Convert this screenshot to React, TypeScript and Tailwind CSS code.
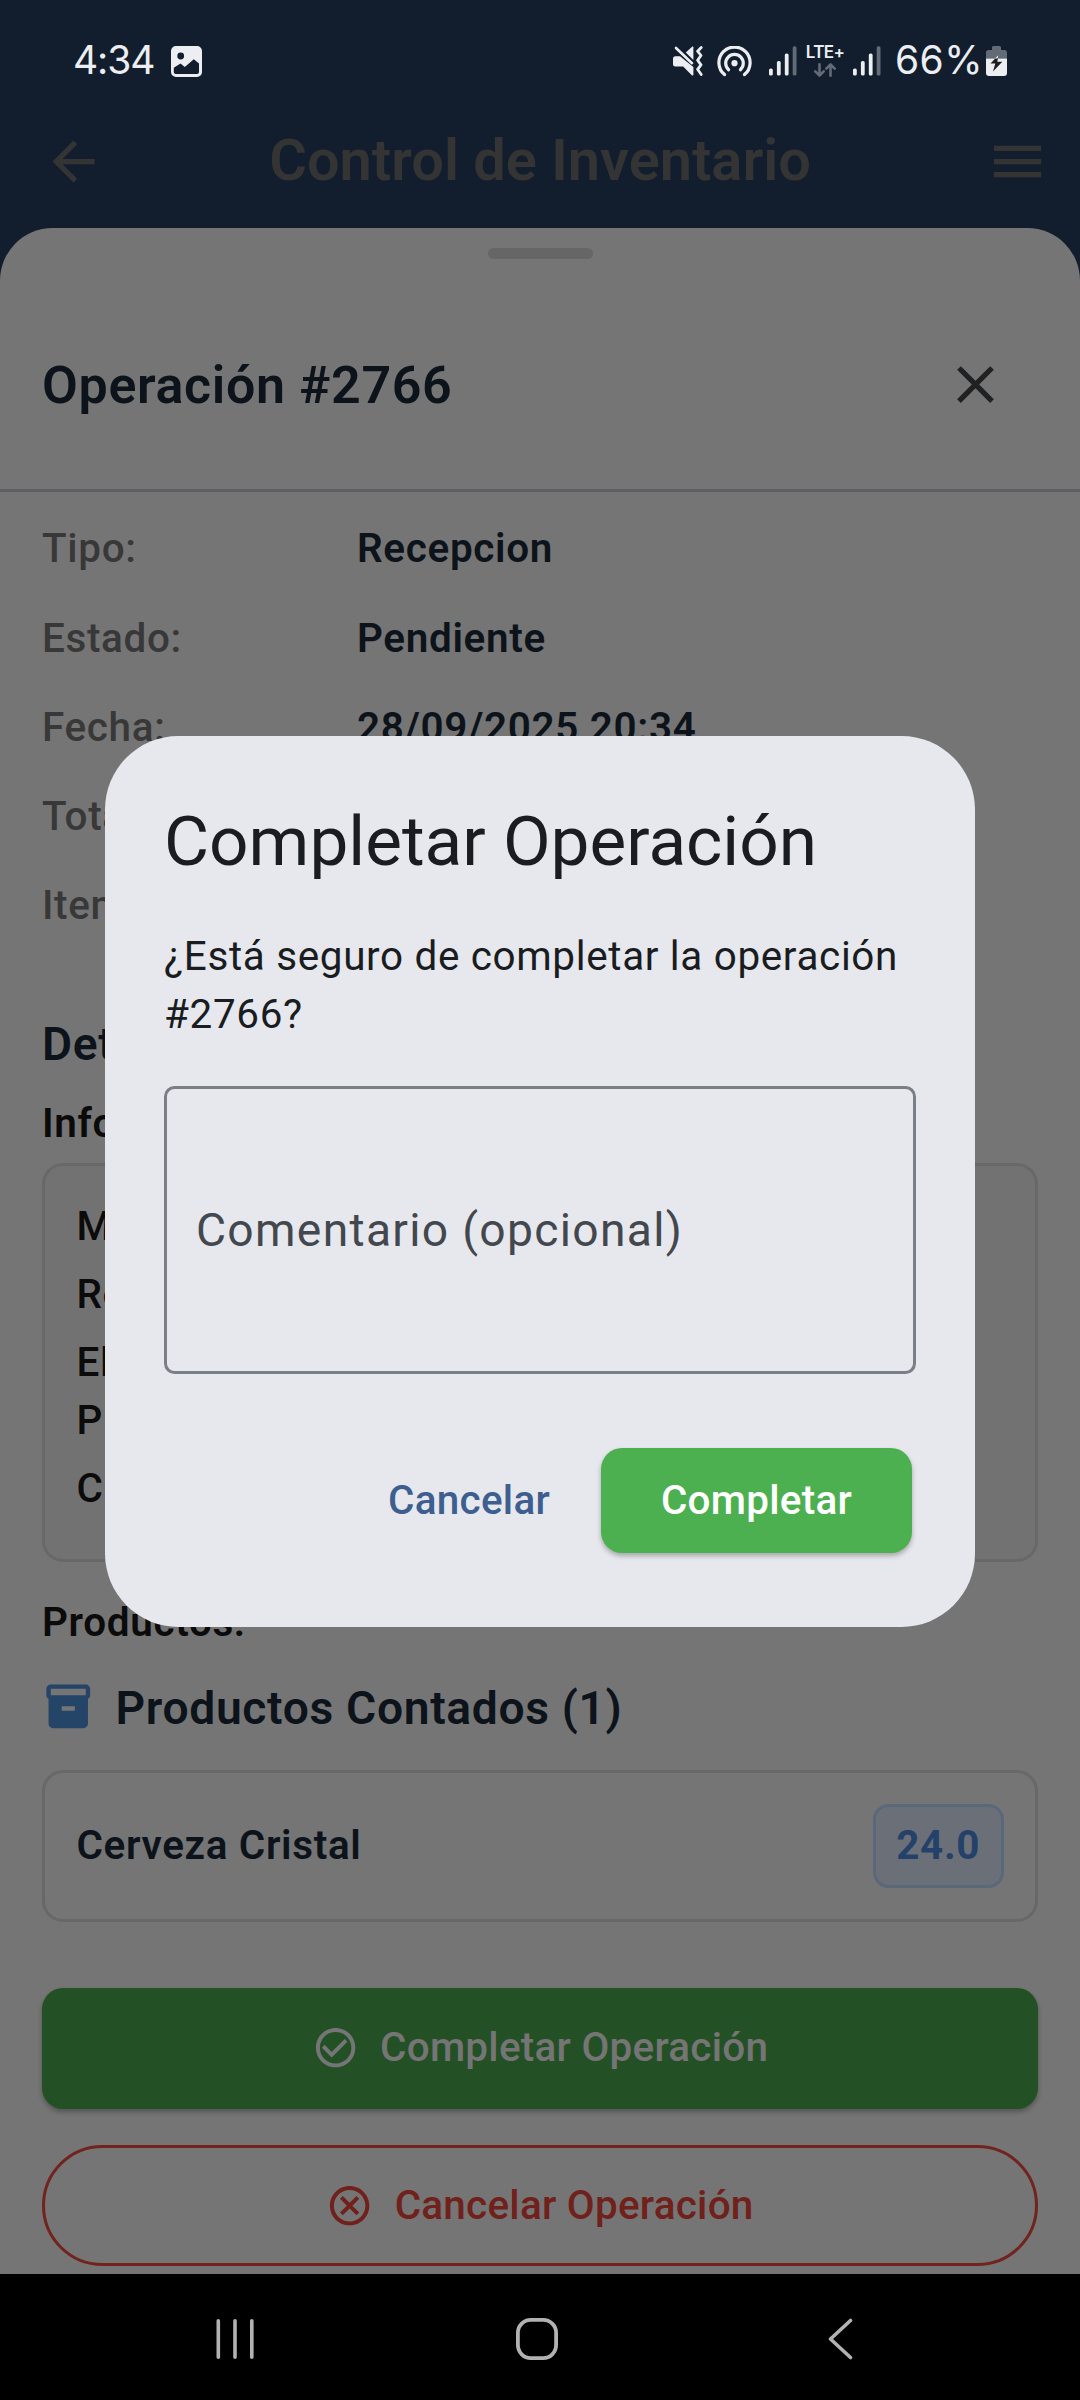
import type { ReactNode } from "react";

function MaterialIcon({ path, className }: { path: string; className: string }) {
  return (
    <svg viewBox="0 0 24 24" fill="currentColor" className={className}>
      <path d={path} />
    </svg>
  );
}

const icons = {
  back: "M20 11H7.83l5.59-5.59L12 4l-8 8 8 8 1.41-1.41L7.83 13H20v-2z",
  menu: "M3 18h18v-2H3v2zm0-5h18v-2H3v2zm0-7v2h18V6H3z",
  close: "M19 6.41L17.59 5 12 10.59 6.41 5 5 6.41 10.59 12 5 17.59 6.41 19 12 13.41 17.59 19 19 17.59 13.41 12z",
  box: "M20 2H4c-1 0-2 .9-2 2v3.01c0 .72.43 1.34 1 1.69V20c0 1.1 1.1 2 2 2h14c.9 0 2-.9 2-2V8.7c.57-.35 1-.97 1-1.69V4c0-1.1-1-2-2-2zm-5 12H9v-2h6v2zm5-7H4V4l16-.02V7z",
  check:
    "M16.59 7.58L10 14.17l-3.59-3.58L5 12l5 5 8-8-1.41-1.42zM12 2C6.48 2 2 6.48 2 12s4.48 10 10 10 10-4.48 10-10S17.52 2 12 2zm0 18c-4.42 0-8-3.58-8-8s3.58-8 8-8 8 3.58 8 8-3.58 8-8 8z",
  cancel:
    "M15.49 7.1L12 10.59 8.51 7.1 7.1 8.51 10.59 12 7.1 15.49 8.51 16.9 12 13.41 15.49 16.9 16.9 15.49 13.41 12 16.9 8.51 15.49 7.1zM12 2C6.47 2 2 6.47 2 12s4.47 10 10 10 10-4.47 10-10S17.53 2 12 2zm0 18c-4.41 0-8-3.59-8-8s3.59-8 8-8 8 3.59 8 8-3.59 8-8 8z",
};

function SignalBars() {
  return (
    <svg width="28" height="30" viewBox="0 0 28 30" fill="#eceef2">
      <rect x="0" y="22.5" width="3.8" height="7" rx="1.6" />
      <rect x="7.9" y="15" width="3.8" height="14.5" rx="1.6" />
      <rect x="15.8" y="7.5" width="3.8" height="22" rx="1.6" />
      <rect x="23.7" y="0.3" width="3.8" height="29.2" rx="1.6" fill="#636b77" />
    </svg>
  );
}

function StatusBar() {
  return (
    <div className="flex h-[88px] shrink-0 items-start pt-[46px] pl-[73px] pr-[73px] font-['Inter',sans-serif] text-[39px] leading-[30px] tracking-[-1.1px] text-[#eceef2]">
      <span className="-mt-px w-[98px]">4:34</span>
      <svg width="31" height="31" viewBox="0 0 31 31">
        <path
          fillRule="evenodd"
          fill="#eceef2"
          d="M5 0h21a5 5 0 0 1 5 5v21a5 5 0 0 1-5 5H5a5 5 0 0 1-5-5V5a5 5 0 0 1 5-5zM9.7 6.6a3.4 3.4 0 1 0 0 6.8 3.4 3.4 0 0 0 0-6.8zM2.8 21.7V26a2 2 0 0 0 2 2H26a2 2 0 0 0 2-2V17.5l-5.2-4.2L13.8 21l-4.3-3.6z"
        />
      </svg>
      <div className="ml-auto flex items-start">
        <svg width="30" height="30" viewBox="0 0 30 30" fill="#eceef2" className="mr-[14px]">
          <path d="M2 10.3h5L20.4 21v7.6c0 .9-.9 1.2-1.6.6L10.2 20.6H2.3A2.3 2.3 0 0 1 0 18.3v-5.6a2.4 2.4 0 0 1 2-2.4z" />
          <path d="M12.8 6.6 18.8.9c.7-.6 1.6-.3 1.6.6V13.9z" />
          <path d="M3 2 19 17.2" stroke="#eceef2" strokeWidth="2.6" strokeLinecap="round" />
          <path d="M28.2 1.5l-3.6 3.7 3.4 4.3-3.4 4.7 3.4 4.6-3.4 4.5 3.6 5.2" fill="none" stroke="#eceef2" strokeWidth="2.8" strokeLinecap="round" strokeLinejoin="round" />
        </svg>
        <svg width="35" height="31" viewBox="0 0 35 31" fill="none" stroke="#eceef2" strokeWidth="3.2" strokeLinecap="round" className="mr-[17px]">
          <path d="M7.5 28.6A15.6 15.6 0 1 1 27.5 28.6" />
          <path d="M11.6 23.8A8.8 8.8 0 1 1 23.4 23.8" />
          <circle cx="17.5" cy="17.2" r="3.1" fill="#eceef2" stroke="none" />
        </svg>
        <SignalBars />
        <div className="ml-[9px] flex w-[38px] flex-col items-center">
          <span className="text-[17px] font-semibold leading-[13px] tracking-[-0.6px]">LTE+</span>
          <svg width="22" height="14" viewBox="0 0 22 14" fill="none" stroke="#636b77" strokeWidth="2.6" strokeLinecap="round" strokeLinejoin="round" className="mt-[4px]">
            <path d="M5.5 1.3v11M1.3 8.3l4.2 4.2 4.2-4.2M16.5 12.7v-11M12.3 5.7l4.2-4.2 4.2 4.2" />
          </svg>
        </div>
        <span className="ml-[9px]">
          <SignalBars />
        </span>
        <span className="-mt-px ml-[14px] w-[91px] tracking-[0.4px]">66%</span>
        <svg width="21" height="30" viewBox="0 0 21 30">
          <path d="M6 1.5A1.5 1.5 0 0 1 7.5 0h6A1.5 1.5 0 0 1 15 1.5V4h3.5A2.5 2.5 0 0 1 21 6.5V12.5H0V6.5A2.5 2.5 0 0 1 2.5 4H6z" fill="#636b77" />
          <path d="M0 12.5H21V27a3 3 0 0 1-3 3H3a3 3 0 0 1-3-3z" fill="#eceef2" />
          <path d="M12.5 9 4.5 17.5h4.8L7 25.5l9.3-9.8h-5z" fill="#1d1d1d" />
          <path d="M12.5 9 8.9 12.5h2.7z" fill="#eceef2" />
        </svg>
      </div>
    </div>
  );
}

function AppBar() {
  return (
    <div className="flex h-[147px] shrink-0 items-center justify-between pl-[42px] pr-[31px] text-[#343434]">
      <MaterialIcon path={icons.back} className="size-[63px]" />
      <h1 className="pb-[3px] pr-[11px] text-[57.75px] font-semibold leading-[72px]">Control de Inventario</h1>
      <MaterialIcon path={icons.menu} className="size-[63px]" />
    </div>
  );
}

function InfoRow({ label, value }: { label: string; value?: string }) {
  return (
    <div className="flex font-semibold text-[#0d131a]">
      <span className="w-[315px] font-medium text-[#383838]">{label}</span>
      <span>{value}</span>
    </div>
  );
}

function ActionButton({ icon, className, children }: { icon: string; className: string; children: ReactNode }) {
  return (
    <button className={"flex h-[121px] w-full items-center justify-center gap-[21px] font-medium tracking-[0.26px] " + className}>
      <MaterialIcon path={icon} className="size-[47.25px]" />
      <span>{children}</span>
    </button>
  );
}

function OperationSheet() {
  return (
    <section className="relative -mt-[7.5px] flex-1 overflow-hidden rounded-t-[52.5px] bg-[#757575] text-[40.43px] leading-[57.75px] tracking-[0.66px] text-[#0b0b0b]">
      <div className="mx-auto mt-[20.5px] h-[10.5px] w-[105px] rounded-full bg-[#666666]" />
      <header className="flex items-center justify-between px-[42px] pb-[41.5px] pt-[63px]">
        <h2 className="pt-[2px] text-[51.98px] font-semibold leading-[66px] text-[#0d131a]">Operación #2766</h2>
        <span className="flex size-[126px] items-center justify-center text-[#202123]">
          <MaterialIcon path={icons.close} className="size-[63px]" />
        </span>
      </header>
      <div className="h-[3px] bg-[#5e5f62]" />
      <div className="px-[42px] pt-[28.25px]">
        <div className="flex flex-col gap-[31.5px]">
          <InfoRow label="Tipo:" value="Recepcion" />
          <InfoRow label="Estado:" value="Pendiente" />
          <InfoRow label="Fecha:" value="28/09/2025 20:34" />
          <InfoRow label="Total:" />
          <InfoRow label="Items:" />
        </div>
        <h3 className="mt-[74.5px] text-[46.2px] font-semibold leading-[69.3px] text-[#0d131a]">Detalles</h3>
        <h4 className="mt-[16px] font-semibold">Información:</h4>
        <div className="mt-[10.75px] flex h-[399px] flex-col gap-[10.5px] rounded-[21px] border-[3px] border-[#686868] bg-[#727272] p-[31.5px] font-medium">
          <p>Motivo</p>
          <p>Recepcion</p>
          <p>
            El
            <br />
            P
          </p>
          <p>C</p>
        </div>
        <h4 className="mt-[32px] font-semibold">Productos:</h4>
        <div className="mt-[21.5px] flex items-center gap-[21px]">
          <MaterialIcon path={icons.box} className="mb-[3px] size-[52.5px] text-[#244468]" />
          <h3 className="text-[46.2px] font-semibold leading-[69.3px] text-[#0d131a]">Productos Contados (1)</h3>
        </div>
        <div className="mt-[27.25px] flex h-[152.25px] items-center justify-between rounded-[21px] border-[3px] border-[#686868] px-[31.5px]">
          <span className="font-semibold text-[#0d131a]">Cerveza Cristal</span>
          <span className="flex h-[84px] w-[130.5px] items-center justify-center rounded-[15.75px] border-[3px] border-[#59687b] bg-[#6b7078] font-bold text-[#244269]">24.0</span>
        </div>
        <div className="mt-[65.25px] flex flex-col gap-[36.75px]">
          <ActionButton icon={icons.check} className="rounded-[21px] bg-[#245026] text-[#757575] shadow-[0_3px_5px_rgba(0,0,0,0.28)]">
            Completar Operación
          </ActionButton>
          <ActionButton icon={icons.cancel} className="rounded-full border-[3px] border-[#70241d] text-[#70211b]">
            Cancelar Operación
          </ActionButton>
        </div>
      </div>
    </section>
  );
}

function NavigationBar() {
  return (
    <nav className="flex h-[126px] shrink-0 items-center bg-black pl-[215px] pt-[4px] text-[#b2b2b2]">
      <svg width="40" height="42" viewBox="0 0 40 42" stroke="currentColor" strokeWidth="3.6" strokeLinecap="round">
        <path d="M3.3 2.8v36.4M20 2.8v36.4M36.8 2.8v36.4" />
      </svg>
      <svg width="42" height="42" viewBox="0 0 42 42" fill="none" stroke="currentColor" strokeWidth="3.8" className="ml-[261px]">
        <rect x="1.9" y="1.9" width="38.2" height="38.2" rx="13" />
      </svg>
      <svg width="26" height="42" viewBox="0 0 26 42" fill="none" stroke="currentColor" strokeWidth="3.6" strokeLinecap="round" strokeLinejoin="round" className="ml-[269px]">
        <path d="M23.5 2.5 3.5 21l20 18.5" />
      </svg>
    </nav>
  );
}

function ConfirmDialog() {
  return (
    <div
      role="dialog"
      className="absolute left-[105px] top-[735.5px] h-[891px] w-[870px] rounded-[73.5px] bg-[#e7e8ed] px-[59px] pt-[60px] text-[40.43px] leading-[57.75px] text-[#191c20]"
    >
      <h2 className="text-[69.3px] leading-[92.4px]">Completar Operación</h2>
      <p className="mt-[40px] tracking-[0.66px]">¿Está seguro de completar la operación #2766?</p>
      <div className="mt-[42.3px] flex h-[288.75px] items-center rounded-[10.5px] border-[3px] border-[#7a7e87] px-[29px] pt-[2px] text-[46.2px] tracking-[1.31px] text-[#43474e]">
        Comentario (opcional)
      </div>
      <div className="mt-[73.4px] flex items-center justify-end gap-[51px] pr-[4px] font-medium tracking-[0.26px]">
        <button className="pt-[2px] text-[#3d5f90]">Cancelar</button>
        <button className="h-[105px] w-[311px] rounded-[21px] bg-[#4db050] pt-[2px] text-white shadow-[0_3px_5px_rgba(0,0,0,0.28)]">Completar</button>
      </div>
    </div>
  );
}

export default function App() {
  return (
    <main className="relative flex h-[2400px] w-[1080px] flex-col overflow-hidden bg-[#121e2d] font-['Roboto',sans-serif]">
      <StatusBar />
      <AppBar />
      <OperationSheet />
      <NavigationBar />
      <ConfirmDialog />
    </main>
  );
}
